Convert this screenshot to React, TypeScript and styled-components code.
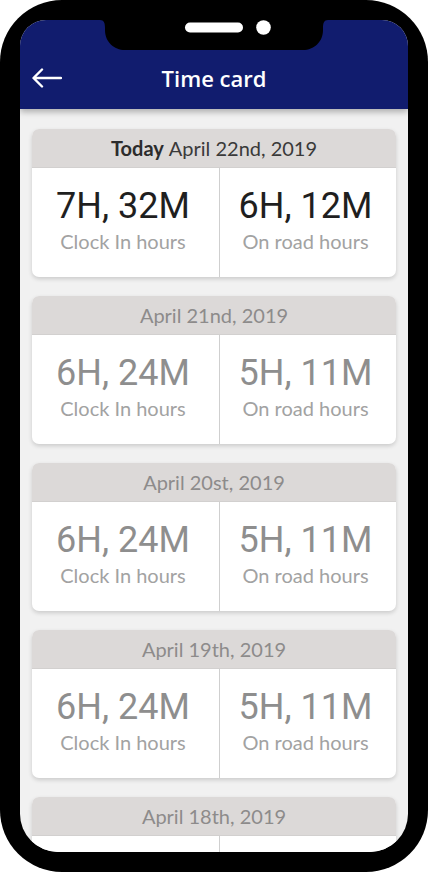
import React from "react";
import styled, { createGlobalStyle } from "styled-components";

const Global = createGlobalStyle`
  html, body { margin: 0; padding: 0; background: #ffffff; }
  body { font-family: "Lato", "Liberation Sans", sans-serif; }
  #root { width: 428px; height: 872px; }
`;

const Phone = styled.div`
  box-sizing: border-box;
  width: 428px;
  height: 872px;
  background: #000;
  border-radius: 62px;
  padding: 20px;
  position: relative;
`;

const Screen = styled.div`
  width: 100%;
  height: 100%;
  border-radius: 26px 26px 38px 38px;
  overflow: hidden;
  display: flex;
  flex-direction: column;
  background: #f1f1f1;
`;

const Notch = styled.svg`
  position: absolute;
  left: 100px;
  top: 20px;
  z-index: 5;
`;

const Header = styled.header`
  flex: 0 0 auto;
  height: 89px;
  box-sizing: border-box;
  padding: 26px 12px 0;
  background: #111c6e;
  display: grid;
  grid-template-columns: 40px 1fr 40px;
  align-items: center;
  box-shadow: 0 3px 6px rgba(0, 0, 0, 0.28);
  position: relative;
  z-index: 2;
`;

const BackButton = styled.button`
  border: 0;
  background: transparent;
  padding: 0;
  width: 30px;
  height: 20px;
  display: flex;
  align-items: center;
`;

const Title = styled.h1`
  margin: 0;
  text-align: center;
  color: #ffffff;
  font-family: "Open Sans", "Lato", sans-serif;
  font-weight: 600;
  font-size: 22px;
  line-height: 30px;
`;

const List = styled.main`
  flex: 1;
  padding: 20px 12px;
  display: flex;
  flex-direction: column;
  gap: 19px;
  overflow: hidden;
`;

const Card = styled.section`
  flex: 0 0 auto;
  border-radius: 7px;
  background: #ffffff;
  box-shadow: 0 2px 4px rgba(0, 0, 0, 0.16);
  overflow: hidden;
`;

const CardHead = styled.div<{ $active?: boolean }>`
  height: 39px;
  background: #dcd9d8;
  display: flex;
  align-items: center;
  justify-content: center;
  font-family: "Lato", sans-serif;
  font-size: 20px;
  color: ${(p) => (p.$active ? "#3a3a3a" : "#8d8b8b")};
  border-bottom: 1px solid #d2d0cf;
  box-sizing: border-box;
`;

const Strong = styled.b`
  font-weight: 700;
  color: #2c2c2c;
  margin-right: 5px;
`;

const CardBody = styled.div`
  height: 109px;
  display: grid;
  grid-template-columns: 187px 1px 1fr;
`;

const Divider = styled.div`
  background: #cfcfcf;
`;

const Stat = styled.div`
  display: flex;
  flex-direction: column;
  align-items: center;
  padding: 18px 5px 0 0;
`;

const Value = styled.div<{ $active?: boolean }>`
  font-family: "Roboto", sans-serif;
  font-weight: 400;
  font-size: 36px;
  line-height: 40px;
  color: ${(p) => (p.$active ? "#1f1f1f" : "#8e8e8e")};
`;

const Label = styled.div`
  font-family: "Lato", sans-serif;
  font-size: 20px;
  line-height: 24px;
  color: #a2a2a2;
  margin-top: 3px;
`;

type Day = { date: string; today?: boolean; clock: string; road: string };

const days: Day[] = [
  { date: "April 22nd, 2019", today: true, clock: "7H, 32M", road: "6H, 12M" },
  { date: "April 21nd, 2019", clock: "6H, 24M", road: "5H, 11M" },
  { date: "April 20st, 2019", clock: "6H, 24M", road: "5H, 11M" },
  { date: "April 19th, 2019", clock: "6H, 24M", road: "5H, 11M" },
  { date: "April 18th, 2019", clock: "6H, 24M", road: "5H, 11M" },
];

export default function App() {
  return (
    <>
      <Global />
      <Phone>
        <Notch width="228" height="31" viewBox="0 0 228 31">
          <path
            d="M0 0 L228 0 C224 0 223 3 223 8 L223 10 C223 22 214 30 203 30 L25 30 C14 30 5 22 5 10 L5 8 C5 3 4 0 0 0 Z"
            fill="#000"
          />
          <rect x="85" y="2.5" width="58" height="10" rx="5" fill="#fff" />
          <circle cx="163.5" cy="7.5" r="7.3" fill="#fff" />
        </Notch>
        <Screen>
          <Header>
            <BackButton aria-label="Back">
              <svg width="30" height="20" viewBox="0 0 30 20" fill="none">
                <path
                  d="M29 10 H2 M10 1.5 L1.5 10 L10 18.5"
                  stroke="#fff"
                  strokeWidth="2.4"
                  strokeLinecap="round"
                  strokeLinejoin="round"
                />
              </svg>
            </BackButton>
            <Title>Time card</Title>
            <span />
          </Header>
          <List>
            {days.map((d) => (
              <Card key={d.date}>
                <CardHead $active={d.today}>
                  {d.today && <Strong>Today</Strong>}
                  {d.date}
                </CardHead>
                <CardBody>
                  <Stat>
                    <Value $active={d.today}>{d.clock}</Value>
                    <Label>Clock In hours</Label>
                  </Stat>
                  <Divider />
                  <Stat>
                    <Value $active={d.today}>{d.road}</Value>
                    <Label>On road hours</Label>
                  </Stat>
                </CardBody>
              </Card>
            ))}
          </List>
        </Screen>
      </Phone>
    </>
  );
}
